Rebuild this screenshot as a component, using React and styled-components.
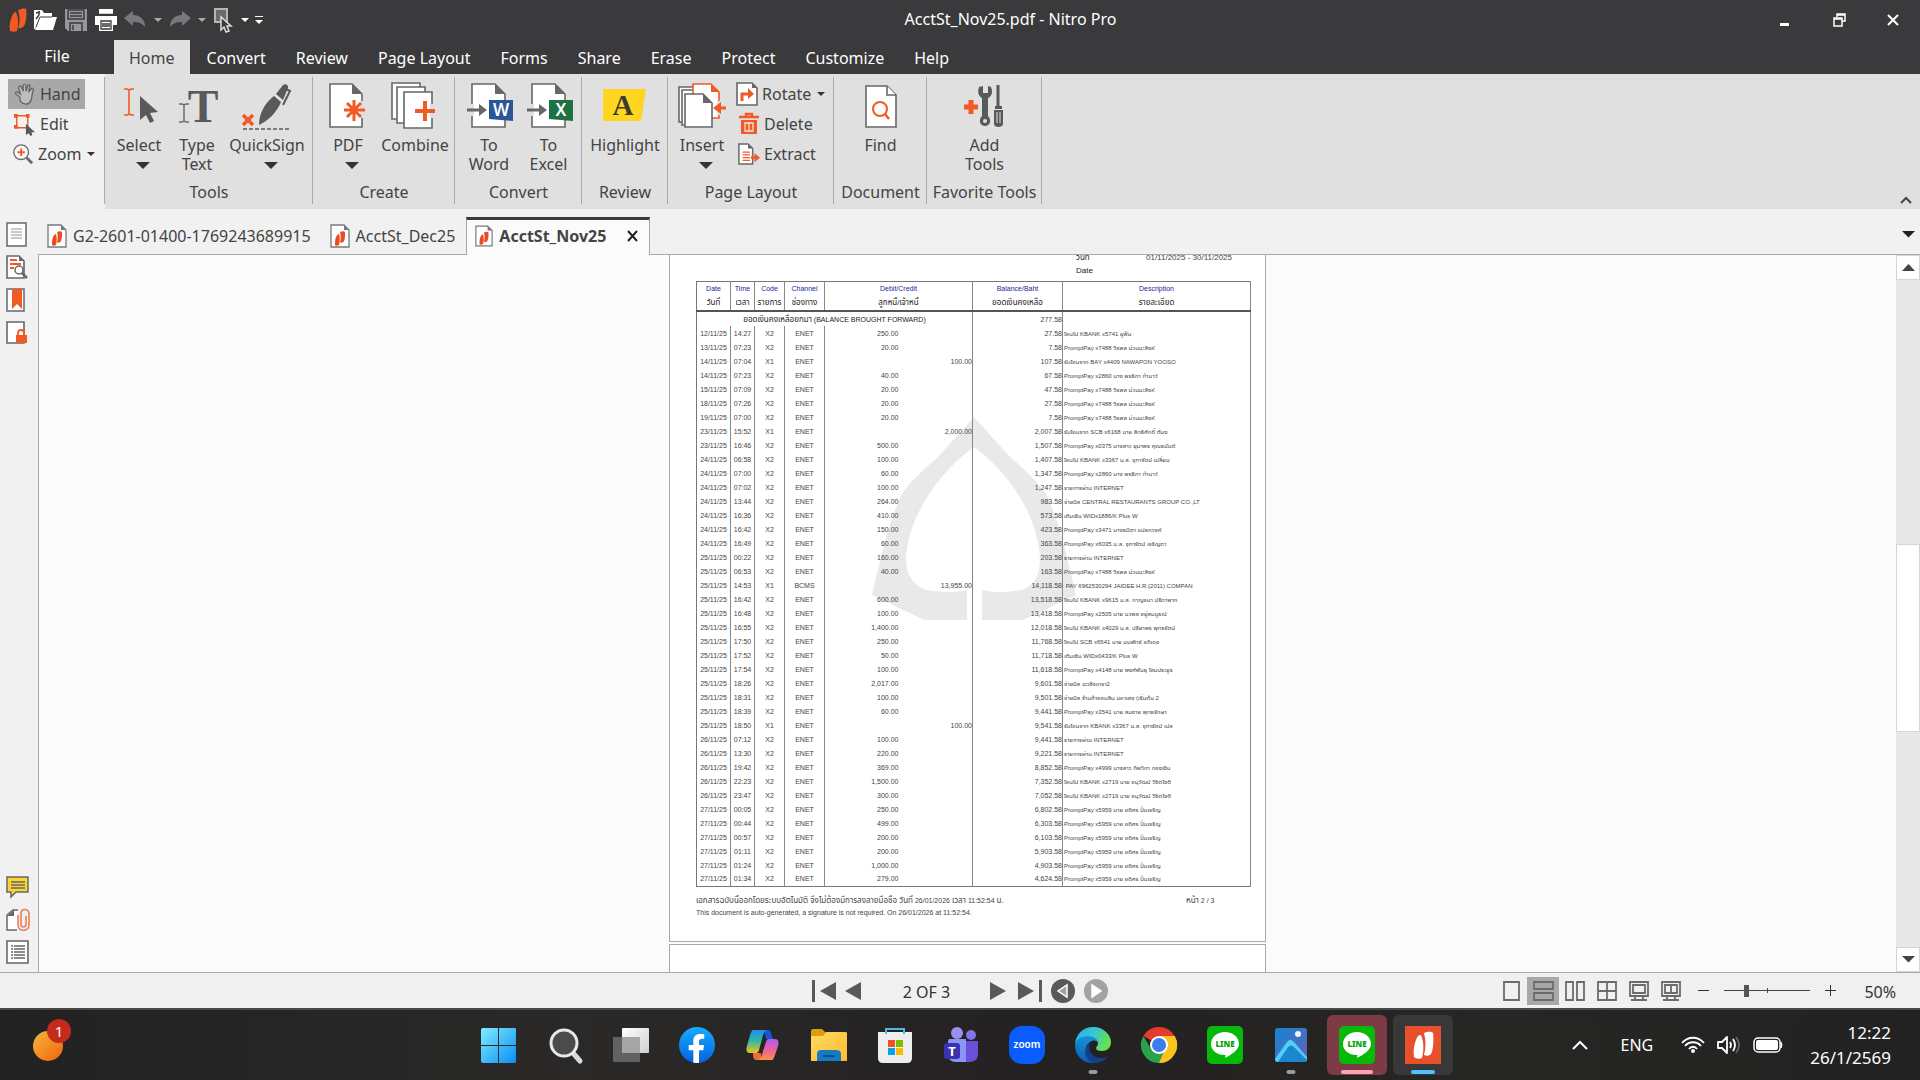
import styled, { createGlobalStyle, css } from "styled-components";
import { FaFacebookF } from "react-icons/fa";

const transactions = [
    ["12/11/25", "14:27", "X2", "ENET", "250.00", "", "27.58", "โอนไป KBANK x5741 ยูฟีน"],
    ["13/11/25", "07:23", "X2", "ENET", "20.00", "", "7.58", "PromptPay x7488 วีรพล น่วมมะสิงห์"],
    ["14/11/25", "07:04", "X1", "ENET", "", "100.00", "107.58", "รับโอนจาก BAY x4409 NAWAPON YOOSO"],
    ["14/11/25", "07:23", "X2", "ENET", "40.00", "", "67.58", "PromptPay x2860 นาง พรธิภา ทำนาว์"],
    ["15/11/25", "07:09", "X2", "ENET", "20.00", "", "47.58", "PromptPay x7488 วีรพล น่วมมะสิงห์"],
    ["18/11/25", "07:26", "X2", "ENET", "20.00", "", "27.58", "PromptPay x7488 วีรพล น่วมมะสิงห์"],
    ["19/11/25", "07:00", "X2", "ENET", "20.00", "", "7.58", "PromptPay x7488 วีรพล น่วมมะสิงห์"],
    ["23/11/25", "15:52", "X1", "ENET", "", "2,000.00", "2,007.58", "รับโอนจาก SCB x6168 นาย สิทธิศักดิ์ ตันง"],
    ["23/11/25", "16:46", "X2", "ENET", "500.00", "", "1,507.58", "PromptPay x0375 นางสาว ยุมาพร คุณธนันต์"],
    ["24/11/25", "06:58", "X2", "ENET", "100.00", "", "1,407.58", "โอนไป KBANK x3367 น.ส. จุฑารัตน์ เปลี่ยน"],
    ["24/11/25", "07:00", "X2", "ENET", "60.00", "", "1,347.58", "PromptPay x2860 นาง พรธิภา ทำนาว์"],
    ["24/11/25", "07:02", "X2", "ENET", "100.00", "", "1,247.58", "รายการผ่าน INTERNET"],
    ["24/11/25", "13:44", "X2", "ENET", "264.00", "", "983.58", "จ่ายบิล CENTRAL RESTAURANTS GROUP CO.,LT"],
    ["24/11/25", "16:36", "X2", "ENET", "410.00", "", "573.58", "เติมเงิน WIDx1886/K Plus W"],
    ["24/11/25", "16:42", "X2", "ENET", "150.00", "", "423.58", "PromptPay x3471 นางธนิตา แปลกวงค์"],
    ["24/11/25", "16:49", "X2", "ENET", "60.00", "", "363.58", "PromptPay x6035 น.ส. จุฑารัตน์ เจริญตา"],
    ["25/11/25", "00:22", "X2", "ENET", "160.00", "", "203.58", "รายการผ่าน INTERNET"],
    ["25/11/25", "06:53", "X2", "ENET", "40.00", "", "163.58", "PromptPay x7488 วีรพล น่วมมะสิงห์"],
    ["25/11/25", "14:53", "X1", "BCMS", "", "13,955.00", "14,118.58", "\u00a0PAY 6962530294 JAIDEE H.R.(2011) COMPAN"],
    ["25/11/25", "16:42", "X2", "ENET", "600.00", "", "13,518.58", "โอนไป KBANK x9615 น.ส. กาญจนา ปรีดาพาก"],
    ["25/11/25", "16:48", "X2", "ENET", "100.00", "", "13,418.58", "PromptPay x2505 นาย นวพล อยู่สมบูรณ์"],
    ["25/11/25", "16:55", "X2", "ENET", "1,400.00", "", "12,018.58", "โอนไป KBANK x4029 น.ส. ปรียาพร พุทธรัตน์"],
    ["25/11/25", "17:50", "X2", "ENET", "250.00", "", "11,768.58", "โอนไป SCB x6541 นาย มนพัทธ์ อภิเดช"],
    ["25/11/25", "17:52", "X2", "ENET", "50.00", "", "11,718.58", "เติมเงิน WIDx0433/K Plus W"],
    ["25/11/25", "17:54", "X2", "ENET", "100.00", "", "11,618.58", "PromptPay x4148 นาย พงศ์พันธุ โฮมประยูร"],
    ["25/11/25", "18:26", "X2", "ENET", "2,017.00", "", "9,601.58", "จ่ายบิล ฉะเชิงเทรา2"],
    ["25/11/25", "18:31", "X2", "ENET", "100.00", "", "9,501.58", "จ่ายบิล ร้านค้าออมสิน มหาเฮง (เริ่มต้น 2"],
    ["25/11/25", "18:39", "X2", "ENET", "60.00", "", "9,441.58", "PromptPay x3541 นาย สมชาย พุทธรักษา"],
    ["25/11/25", "18:50", "X1", "ENET", "", "100.00", "9,541.58", "รับโอนจาก KBANK x3367 น.ส. จุฑารัตน์ เปล"],
    ["26/11/25", "07:12", "X2", "ENET", "100.00", "", "9,441.58", "รายการผ่าน INTERNET"],
    ["26/11/25", "13:30", "X2", "ENET", "220.00", "", "9,221.58", "รายการผ่าน INTERNET"],
    ["26/11/25", "19:42", "X2", "ENET", "369.00", "", "8,852.58", "PromptPay x4999 นางสาว ทิพวิภา กองเงิน"],
    ["26/11/25", "22:23", "X2", "ENET", "1,500.00", "", "7,352.58", "โอนไป KBANK x2719 นาย อนุวัฒน์ วิจิตโชติ"],
    ["26/11/25", "23:47", "X2", "ENET", "300.00", "", "7,052.58", "โอนไป KBANK x2719 นาย อนุวัฒน์ วิจิตโชติ"],
    ["27/11/25", "00:05", "X2", "ENET", "250.00", "", "6,802.58", "PromptPay x5959 นาย อดิศร ปิ่นเจริญ"],
    ["27/11/25", "00:44", "X2", "ENET", "499.00", "", "6,303.58", "PromptPay x5959 นาย อดิศร ปิ่นเจริญ"],
    ["27/11/25", "00:57", "X2", "ENET", "200.00", "", "6,103.58", "PromptPay x5959 นาย อดิศร ปิ่นเจริญ"],
    ["27/11/25", "01:11", "X2", "ENET", "200.00", "", "5,903.58", "PromptPay x5959 นาย อดิศร ปิ่นเจริญ"],
    ["27/11/25", "01:24", "X2", "ENET", "1,000.00", "", "4,903.58", "PromptPay x5959 นาย อดิศร ปิ่นเจริญ"],
    ["27/11/25", "01:34", "X2", "ENET", "279.00", "", "4,624.58", "PromptPay x5959 นาย อดิศร ปิ่นเจริญ"],
];

const menu = ["Home", "Convert", "Review", "Page Layout", "Forms", "Share", "Erase", "Protect", "Customize", "Help"];

const GREY = "#58595b";
const ORANGE = "#f15a24";

/* ---------- icons ---------- */

const Caret = ({ size = 8, color = "#333" }) => (
    <svg width={size} height={size / 2} viewBox="0 0 8 4"><path d="M0 0h8L4 4z" fill={color} /></svg>
);

const NitroMark = ({ width = 18, height = 24, color = "#f15a24" }) => (
    <svg width={width} height={height} viewBox="0 0 18 24">
        <path d="M9 2c3-1 6-2 8-1 1 6 0 12-1 15-1 3-4 5-7 4 2-5 2-12 0-18z" fill={color} />
        <path d="M7 4c2 5 3 11 1 19-2 1-5 1-7 0-1-5 0-10 2-15 1-2 2-4 4-4z" fill={color} />
    </svg>
);

const PdfIcon = ({ active }) => (
    <svg width={active ? 18 : 20} height="24" viewBox="0 0 20 24">
        <path d="M1 1h13l5 5v17H1z" fill="#fff" stroke="#77787a" strokeWidth="1.3" />
        <path d="M14 1l5 5h-5z" fill="#77787a" />
        <path d="M10 8c2-1 4-1 5 0 0 4 0 7-1 9-1 2-3 2-4 1 1-3 1-6 0-10z" fill="#ee4a1f" />
        <path d="M9 10c1 3 1 7 0 11-2 1-3 1-4 0 0-3 0-6 1-8 1-2 2-3 3-3z" fill="#ee4a1f" />
    </svg>
);

const OpenIcon = () => (
    <svg width="25" height="24" viewBox="0 0 25 24">
        <path d="M1 2h8l2 3h8v4H8L2 21H1z" fill="#fff" />
        <path d="M7 9h17l-4 13H2z" fill="#fff" />
        <path d="M3 11l3-4M3 5l4-1M6 3v4" stroke="#3a3a3c" strokeWidth="1.5" fill="none" />
        <path d="M7 9h12M7 9L3 19" stroke="#3a3a3c" strokeWidth="1" fill="none" />
    </svg>
);

const SaveIcon = () => (
    <svg width="24" height="24" viewBox="0 0 24 24">
        <path d="M1 1h22v22H4l-3-3z" fill="#97989a" />
        <path d="M4 2h16v9H4zM6 5h12M6 8h12M6 23v-8h12v8M9 17v5" fill="none" stroke="#3a3a3c" strokeWidth="1.5" />
    </svg>
);

const PrintIcon = () => (
    <svg width="24" height="24" viewBox="0 0 24 24">
        <path d="M5 1h14v5H5zM1 8h22v9h-4v6H5v-6H1z" fill="#fff" />
        <path d="M7 13h10v8H7zM8 16h8M8 18h8M5 6.500h14" fill="none" stroke="#3a3a3c" strokeWidth="1.300" />
    </svg>
);

const UndoIcon = ({ flip }) => (
    <svg width="23" height="20" viewBox="0 0 23 20">
        <path transform={flip ? "translate(23 0) scale(-1 1)" : undefined} d="M0 8L9 1v4c8 0 12 5 12 12-3-4-7-5-12-5v4z" fill="#77787a" />
    </svg>
);

const PointerBoxIcon = () => (
    <svg width="22" height="25" viewBox="0 0 20 25">
        <path d="M2 1h12v13H2z" fill="#6b6c6e" stroke="#b5b5b5" strokeWidth="2" />
        <path d="M8 9v13l3-3 2 5 3-1-2-5h4z" fill="#3a3a3c" stroke="#ddd" strokeWidth="1.500" />
    </svg>
);

const HandIcon = () => (
    <svg width="22" height="25" viewBox="0 0 24 25">
        <path d="M6 15L2 12c-1-1 0-3 2-2l3 2L5 5c0-2 2-2 3-1l2 5V3c0-2 2-2 3 0v6l2-6c1-2 3-1 2 1l-1 6 3-4c1-1 3 0 2 2-2 4-1 9-3 12-2 4-8 4-11 0z" fill="#bdbdbd" stroke="#66676a" strokeWidth="1.500" />
    </svg>
);

const EditIcon = () => (
    <svg width="22" height="25" viewBox="0 0 24 25">
        <path d="M3 3h12v13H3z" fill="none" stroke={ORANGE} strokeWidth="1.500" />
        <path d="M0 1h4v4H0zM13 1h4v4h-4zM0 13h4v4H0z" fill={ORANGE} />
        <path d="M13 12v12l3-2 2 3 2-1-1-3h4z" fill={GREY} />
    </svg>
);

const ZoomIcon = () => (
    <svg width="22" height="25" viewBox="0 0 24 25">
        <circle cx="10" cy="10" r="8" fill="#f7f7f7" stroke="#6b6c6e" strokeWidth="1.500" />
        <path d="M16 16l6 6" stroke="#6b6c6e" strokeWidth="3" />
        <path d="M10 6v8M6 10h8" stroke={ORANGE} strokeWidth="2" />
    </svg>
);

const SelectIcon = () => (
    <svg width="48" height="48" viewBox="0 0 48 48">
        <path d="M9 7h3l2 1 2-1h3M14 8v25M9 33h3l2-1 2 1h3" fill="none" stroke={ORANGE} strokeWidth="1.600" />
        <path d="M25 14v24l6-5 4 8 4-2-4-8 8-1z" fill={GREY} />
    </svg>
);

const TypeTextIcon = () => (
    <svg width="48" height="48" viewBox="0 0 48 48">
        <path d="M6 22h3l2 1 2-1h3M11 22v18M6 40h3l2-1 2 1h3" fill="none" stroke="#6b6c6e" strokeWidth="1.500" />
        <text x="30" y="40" textAnchor="middle" fontFamily="Liberation Serif, serif" fontWeight="bold" fontSize="46" fill={GREY}>T</text>
    </svg>
);

const QuickSignIcon = () => (
    <svg width="50" height="48" viewBox="0 0 50 48">
        <path d="M1 33l10 10M11 33L1 43" stroke={ORANGE} strokeWidth="3.500" />
        <path d="M17 43c0-12 6-22 15-29l7 6c-4 10-12 18-22 23z" fill={GREY} />
        <path d="M34 12l7-9c2-2 6 0 5 3l-5 12z" fill={GREY} />
        <path d="M42 6l6 3-7 14" fill="none" stroke={GREY} strokeWidth="2" />
        <path d="M1 47h48" stroke={GREY} strokeWidth="1.500" strokeDasharray="4 2" />
    </svg>
);

const Sheet = ({ x, y, w = 33, h = 44, fold = 10, stroke = "#66676a" }) => (
    <g>
        <path d={`M${x} ${y}h${w - fold}l${fold} ${fold}v${h - fold}h${-w}z`} fill="#fff" stroke={stroke} strokeWidth="1.600" />
        {fold > 0 && <path d={`M${x + w - fold} ${y}l${fold} ${fold}h${-fold}z`} fill={stroke} />}
    </g>
);

const CreatePdfIcon = () => (
    <svg width="48" height="48" viewBox="0 0 48 48">
        <Sheet x={6} y={2} w={32} h={43} />
        <path d="M38 19v17" stroke="#e0e0e0" strokeWidth="4" />
        <path d="M30 18v21M20 28h21M23 21l14 14M37 21L23 35" stroke={ORANGE} strokeWidth="3" />
    </svg>
);

const CombineIcon = () => (
    <svg width="48" height="48" viewBox="0 0 48 48">
        <Sheet x={1} y={1} w={28} h={36} fold={0} />
        <Sheet x={6} y={5} w={28} h={36} fold={0} />
        <Sheet x={13} y={10} w={28} h={36} fold={0} />
        <path d="M41 22v14" stroke="#e0e0e0" strokeWidth="4" />
        <path d="M34 19v20M24 29h20" stroke={ORANGE} strokeWidth="4" />
    </svg>
);

const OfficeIcon = ({ letter, color }) => (
    <svg width="48" height="48" viewBox="0 0 48 48">
        <Sheet x={7} y={2} w={33} h={43} />
        <path d="M7 22v12" stroke="#e0e0e0" strokeWidth="4" />
        <path d="M2 28h14" stroke="#66676a" strokeWidth="3" />
        <path d="M14 22l8 6-8 6z" fill="#66676a" />
        <path d="M24 18h24v21l-24-2z" fill={color} />
        <text x="36" y="34" textAnchor="middle" fontFamily="Noto Sans, sans-serif" fontWeight="600" fontSize="17" fill="#fff">{letter}</text>
    </svg>
);

const HighlightIcon = () => (
    <svg width="48" height="48" viewBox="0 0 48 48">
        <path d="M2 7h43l-5 32H2z" fill="#ffd51f" />
        <text x="22" y="33" textAnchor="middle" fontFamily="Liberation Serif, serif" fontWeight="bold" fontSize="29" fill="#3c3c32">A</text>
    </svg>
);

const InsertIcon = () => (
    <svg width="50" height="48" viewBox="0 0 50 48">
        <Sheet x={2} y={5} w={27} h={35} fold={0} />
        <Sheet x={5} y={8} w={27} h={35} fold={0} />
        <Sheet x={16} y={2} w={26} h={34} fold={8} stroke={ORANGE} />
        <Sheet x={8} y={12} w={27} h={33} fold={9} />
        <path d="M42 19v14" stroke="#e0e0e0" strokeWidth="4" />
        <path d="M49 26h-8" stroke={ORANGE} strokeWidth="3" />
        <path d="M44 20l-8 6 8 6z" fill={ORANGE} />
    </svg>
);

const RotateIcon = () => (
    <svg width="22" height="24" viewBox="0 0 22 24">
        <Sheet x={1} y={1} w={20} h={22} fold={5} />
        <path d="M6 19v-7h7" fill="none" stroke={ORANGE} strokeWidth="3" />
        <path d="M12 6l6 6-6 5z" fill={ORANGE} />
    </svg>
);

const DeleteIcon = () => (
    <svg width="22" height="24" viewBox="0 0 22 24">
        <path d="M1 5h20M8 4V2h6v2" stroke={ORANGE} strokeWidth="2.500" fill="none" />
        <path d="M3 8h16v14H3z" fill={ORANGE} />
        <path d="M7 11v8h8v-8zM11 11v8" fill="none" stroke="#f4e3dc" strokeWidth="1.300" />
    </svg>
);

const ExtractIcon = () => (
    <svg width="22" height="24" viewBox="0 0 24 24">
        <Sheet x={1} y={1} w={15} h={22} fold={5} />
        <path d="M5 10h8M5 13h8M5 16h8M5 19h8" stroke={ORANGE} strokeWidth="1.500" />
        <path d="M14 16h6" stroke={ORANGE} strokeWidth="3" />
        <path d="M18 11l6 5-6 5z" fill={ORANGE} />
    </svg>
);

const FindIcon = () => (
    <svg width="48" height="48" viewBox="0 0 48 48">
        <path d="M9 4h21l9 9v32H9z" fill="#fff" stroke="#66676a" strokeWidth="1.600" />
        <path d="M30 4v9h9" fill="#fff" stroke="#66676a" strokeWidth="1.600" />
        <circle cx="23" cy="27" r="7" fill="none" stroke={ORANGE} strokeWidth="2" />
        <path d="M28 32l4 5" stroke={ORANGE} strokeWidth="2.500" />
    </svg>
);

const AddToolsIcon = () => (
    <svg width="48" height="48" viewBox="0 0 48 48">
        <path d="M10 18v14M3 25h14" stroke={ORANGE} strokeWidth="5" />
        <path d="M18 5c-2 6 0 9 3 11v18c-4 4-2 10 3 10s7-6 3-10V16c4-2 5-6 3-11l-3-1v7h-5V4z" fill={GREY} />
        <circle cx="24" cy="39" r="2" fill="#e0e0e0" />
        <path d="M37 3v22" stroke={GREY} strokeWidth="3" />
        <path d="M34 24h7v3h-7zM33 28h9v14c0 4-9 4-9 0z" fill={GREY} />
        <path d="M36 30v11M39 30v11" stroke="#e0e0e0" strokeWidth="1" />
    </svg>
);

const PagesIcon = () => (
    <svg width="22" height="25" viewBox="0 0 22 25">
        <path d="M1 1h19v23H1z" fill="#fff" stroke="#66676a" strokeWidth="1.500" />
        <path d="M5 7h11M5 10h11M5 13h11M5 16h11" stroke="#b8b8b8" strokeWidth="1.500" />
    </svg>
);

const SearchPageIcon = () => (
    <svg width="22" height="25" viewBox="0 0 22 25">
        <Sheet x={1} y={1} w={17} h={22} fold={5} />
        <path d="M4 5h7M4 9h11M4 13h4" stroke={ORANGE} strokeWidth="1.800" />
        <circle cx="13" cy="15" r="4" fill="#fff" stroke="#66676a" strokeWidth="1.500" />
        <path d="M16 18l5 5" stroke="#66676a" strokeWidth="2.500" />
    </svg>
);

const BookmarkIcon = () => (
    <svg width="22" height="25" viewBox="0 0 22 25">
        <path d="M1 1h17v22H1z" fill="#fff" stroke="#66676a" strokeWidth="1.500" />
        <path d="M6 1h10v20l-5-5-5 5z" fill={ORANGE} />
    </svg>
);

const SecurityIcon = () => (
    <svg width="22" height="25" viewBox="0 0 22 25">
        <Sheet x={1} y={1} w={17} h={21} fold={0} />
        <path d="M12 14v-2c0-4 6-4 6 0v2" fill="none" stroke={ORANGE} strokeWidth="1.800" />
        <path d="M10 14h11v8H10z" fill={ORANGE} />
    </svg>
);

const CommentIcon = () => (
    <svg width="24" height="24" viewBox="0 0 24 24">
        <path d="M1 2h21v15h-12l-5 5v-5H1z" fill="#fcd535" stroke="#66676a" strokeWidth="1.500" />
        <path d="M5 7h14M5 10h14M5 13h14" stroke="#66676a" strokeWidth="1.500" />
    </svg>
);

const AttachIcon = () => (
    <svg width="24" height="24" viewBox="0 0 24 24">
        <path d="M11 22H1V7l6-5h5v20z" fill="#fff" />
        <path d="M11 22H1V7l6-5h5" fill="none" stroke="#66676a" strokeWidth="1.500" />
        <path d="M1 8l7-6v6z" fill="#66676a" />
        <path d="M12 7v10c0 7 11 7 11 0V6c0-6-8-6-8 0v10c0 4 5 4 5 0V8" fill="none" stroke="#f0795a" strokeWidth="1.600" />
    </svg>
);

const ListIcon = () => (
    <svg width="24" height="25" viewBox="0 0 24 25">
        <path d="M1 1h21v22H1z" fill="#fff" stroke="#66676a" strokeWidth="1.600" />
        <path d="M5 6h2M5 9h2M5 12h2M5 15h2M5 18h2M8 6h11M8 9h11M8 12h11M8 15h11M8 18h11" stroke="#66676a" strokeWidth="1.500" />
    </svg>
);

const NavIcon = ({ kind }) => {
    if (kind === "first" || kind === "last") {
        return (
            <svg width="24" height="22" viewBox="0 0 24 22">
                <g transform={kind === "last" ? "translate(24 0) scale(-1 1)" : undefined} fill={GREY}>
                    <path d="M0 0h3v22H0zM24 2v18L8 11z" />
                </g>
            </svg>
        );
    }
    return (
        <svg width="16" height="22" viewBox="0 0 16 22">
            <path d={kind === "prev" ? "M16 2v18L0 11z" : "M0 2v18l16-9z"} fill={GREY} />
        </svg>
    );
};

const RoundNavIcon = ({ back }) => (
    <svg width="24" height="24" viewBox="0 0 24 24">
        <circle cx="12" cy="12" r="12" fill={back ? GREY : "#a3a3a3"} />
        <path d={back ? "M16 6v12l-9-6z" : "M8 6v12l9-6z"} fill={back ? "#a0a0a0" : "#fff"} stroke="#fff" strokeWidth="1.500" />
    </svg>
);

const viewPaths = {
    single: "M3 1h15v18H3z",
    continuous: "M1 1h19v7H1zM1 12h19v7H1z",
    facing: "M1 1h7v18H1zM12 1h7v18h-7z",
    grid: "M1 1h18v18H1zM10 1v18M1 10h18",
    screen: "M1 1h18v14H1zM4 4h12v8H4zM6 15v3M14 15v3M2 19h16",
    screenFacing: "M1 1h18v14H1zM4 4h12v8H4zM10 4v8M6 15v3M14 15v3M2 19h16",
};

const ViewIcon = ({ kind }) => (
    <svg width="21" height="20" viewBox="0 0 21 20">
        <path d={viewPaths[kind]} fill="none" stroke="#6b6c6e" strokeWidth="1.800" />
    </svg>
);

const WindowsIcon = () => (
    <svg width="36" height="36" viewBox="0 0 36 36">
        <defs><linearGradient id="win" x1="0" y1="0" x2="1" y2="1"><stop offset="0" stopColor="#7eeeff" /><stop offset="1" stopColor="#0a8df5" /></linearGradient></defs>
        <path d="M2 1h15v17H0V3q0-2 2-2zM18 1h16q1 0 1 2v15H18zM0 19h17v17H2q-2 0-2-2zM18 19h17v15q0 2-1 2H18z" fill="url(#win)" />
    </svg>
);

const SearchIcon = () => (
    <svg width="36" height="36" viewBox="0 0 36 36">
        <path d="M26 26l7 8" stroke="#d9dbde" strokeWidth="5" strokeLinecap="round" />
        <circle cx="17" cy="16" r="13" fill="#4a4b4c" stroke="#e9e9ea" strokeWidth="3" />
    </svg>
);

const TaskViewIcon = () => (
    <svg width="36" height="36" viewBox="0 0 36 36">
        <defs><linearGradient id="tv" x1="0" y1="0" x2="1" y2="1"><stop offset="0" stopColor="#fff" /><stop offset="1" stopColor="#cfcfcf" /></linearGradient></defs>
        <rect x="9" y="1" width="27" height="25" rx="1" fill="url(#tv)" />
        <rect x="0" y="10" width="27" height="25" rx="1" fill="#6c6c6c" opacity=".85" />
        <rect x="9" y="10" width="18" height="16" fill="#a5a5a5" />
    </svg>
);

const CopilotIcon = () => (
    <svg width="36" height="36" viewBox="0 0 36 36">
        <defs>
            <linearGradient id="cpA" x1="0" y1="0" x2="0" y2="1"><stop offset="0" stopColor="#1f8ff0" /><stop offset=".45" stopColor="#2bb7a5" /><stop offset="1" stopColor="#ecc61e" /></linearGradient>
            <linearGradient id="cpB" x1="0" y1="0" x2="0" y2="1"><stop offset="0" stopColor="#a95df2" /><stop offset=".5" stopColor="#ec5fa3" /><stop offset="1" stopColor="#f8953d" /></linearGradient>
        </defs>
        <path d="M19 3h4c3 0 3 3 4 6l1 3h-7z" fill="#1754d6" />
        <path d="M8 3h14c-3 1-4 5-5 9l-3 11c-1 3-2 3-4 3H5c-4 0-4-4-3-7L5 8c1-3 2-5 3-5z" fill="url(#cpA)" />
        <path d="M16 33h-5c-3 0-3-4-3-7h8z" fill="#f06a35" />
        <path d="M27 33H13c3-1 4-5 5-9l3-9c1-3 2-3 4-3h5c4 0 4 4 3 7l-3 9c-1 3-2 5-3 5z" fill="url(#cpB)" />
    </svg>
);

const FolderIcon = () => (
    <svg width="36" height="36" viewBox="0 0 36 36">
        <defs><linearGradient id="fd" x1="0" y1="0" x2="1" y2="1"><stop offset="0" stopColor="#ffd968" /><stop offset="1" stopColor="#fcbd2b" /></linearGradient></defs>
        <path d="M0 4q0-2 2-2h9l4 4v8H0z" fill="#dd9d10" />
        <path d="M0 9h12l3-4h19q2 0 2 1v28H0z" fill="url(#fd)" />
        <path d="M6 34V27q0-4 4-4h15q5 0 5 4v7z" fill="#137bc1" />
        <path d="M12 29h12" stroke="#0c4f86" strokeWidth="2" />
    </svg>
);

const StoreIcon = () => (
    <svg width="36" height="36" viewBox="0 0 36 36">
        <path d="M9 8V2h18v6" fill="none" stroke="#4cb8ea" strokeWidth="2" />
        <path d="M1 5h34v26q0 5-5 5H6q-5 0-5-5z" fill="#eeeeee" />
        <path d="M9 7V5M27 7V5" stroke="#4cb8ea" strokeWidth="2" />
        <path d="M11 13h7v7h-7z" fill="#f25022" /><path d="M19 13h7v7h-7z" fill="#7fba00" />
        <path d="M11 21h7v7h-7z" fill="#00a4ef" /><path d="M19 21h7v7h-7z" fill="#ffb900" />
    </svg>
);

const TeamsIcon = () => (
    <svg width="36" height="36" viewBox="0 0 36 36">
        <circle cx="14" cy="6" r="6" fill="#9a8ff0" /><circle cx="28" cy="8" r="5" fill="#8274e6" />
        <path d="M20 14h15v13q0 8-9 8h-6z" fill="#6a50d8" />
        <path d="M6 12h17v23H13q-8 0-8-8V14z" fill="#8a95f8" />
        <rect x="1" y="16" width="16" height="16" rx="3" fill="#3a32b0" />
        <text x="9" y="29" textAnchor="middle" fontFamily="Noto Sans, sans-serif" fontWeight="bold" fontSize="13" fill="#fff">T</text>
    </svg>
);

const ZoomAppIcon = () => (
    <svg width="36" height="36" viewBox="0 0 36 36">
        <rect width="36" height="38" y="-1" rx="13" fill="#0b5cff" />
        <text x="18" y="21" textAnchor="middle" fontFamily="Noto Sans, sans-serif" fontWeight="600" fontSize="10" fill="#fff">zoom</text>
    </svg>
);

const EdgeIcon = () => (
    <svg width="36" height="36" viewBox="0 0 36 36">
        <defs>
            <linearGradient id="edA" x1="0" y1="0" x2="1" y2=".4"><stop offset="0" stopColor="#27a9e8" /><stop offset=".5" stopColor="#35c4dc" /><stop offset="1" stopColor="#63e053" /></linearGradient>
            <linearGradient id="edB" x1="0" y1="0" x2="0" y2="1"><stop offset="0" stopColor="#1694dc" /><stop offset="1" stopColor="#0c5cae" /></linearGradient>
        </defs>
        <path d="M0 17C1 7 8 0 18 0c11 0 18 8 18 15 0 6-4 9-9 9-4 0-6-1-6-3 0-1 2-2 2-5 0-3-4-6-8-6C8 10 2 13 0 17z" fill="url(#edA)" />
        <path d="M0 18c1-6 7-9 13-9 5 0 9 3 10 6-2-1-4-2-6-1-9 3-8 16 3 22C8 37 0 29 0 18z" fill="url(#edB)" />
        <path d="M15 16c-3 8 3 15 11 15 3 0 5-1 7-2-3 5-8 7-14 7C8 33 8 20 15 16z" fill="#123f86" />
    </svg>
);

const ChromeIcon = () => (
    <svg width="36" height="36" viewBox="0 0 36 36">
        <path d="M18 18L2.400 9A18 18 0 0 1 33.600 9z" fill="#e33b2e" />
        <path d="M18 18L33.600 9A18 18 0 0 1 18 36z" fill="#fcc31e" />
        <path d="M18 36A18 18 0 0 1 2.400 9L10 22l8 2 6-2z" fill="#2ba24c" />
        <path d="M18 9h15.600A18 18 0 0 1 18 36l8-13z" fill="#fcc31e" />
        <circle cx="18" cy="18" r="9" fill="#fff" /><circle cx="18" cy="18" r="7" fill="#3b7ded" />
    </svg>
);

const LineIcon = () => (
    <svg width="36" height="36" viewBox="0 0 36 36">
        <rect width="36" height="38" y="-1" rx="5" fill="#06b908" />
        <path d="M18 5c8 0 14 5 14 12 0 6-8 11-14 14 0-1 1-3 0-3C9 28 4 23 4 17 4 10 10 5 18 5z" fill="#fff" />
        <text x="18" y="20" textAnchor="middle" fontFamily="Noto Sans, sans-serif" fontWeight="900" fontSize="8" fill="#06a508">LINE</text>
    </svg>
);

const PhotosIcon = () => (
    <svg width="36" height="36" viewBox="0 0 36 36">
        <defs><linearGradient id="ph" x1="0" y1="0" x2="1" y2="1"><stop offset="0" stopColor="#1684d3" /><stop offset="1" stopColor="#6461b7" /></linearGradient></defs>
        <rect x="2" y="1" width="32" height="34" rx="3" fill="url(#ph)" />
        <path d="M3 34l12-14q3-3 6 0l13 13q0 2-3 2H5z" fill="#1889d0" />
        <path d="M2 32l12-17q3-4 7 0l13 15v3L21 20q-3-3-6 0L5 35q-3 0-3-3z" fill="#4fd0f5" />
        <circle cx="25" cy="7" r="3" fill="#e8f4ff" />
    </svg>
);

const NitroAppIcon = () => (
    <svg width="36" height="36" viewBox="0 0 36 36">
        <rect width="36" height="38" y="-1" fill="#e8502c" />
        <path d="M19 6c3-1 7-2 9 0 1 8 0 15-1 19-1 3-4 5-8 3 2-7 2-15 0-22z" fill="#fff" />
        <path d="M16 8c3 7 3 15 1 23-3 1-6 1-8-1-1-6 0-12 2-17 1-3 2-5 5-5z" fill="#fff" />
    </svg>
);

const taskbarApps = [
    { name: "Start", icon: <WindowsIcon /> },
    { name: "Search", icon: <SearchIcon /> },
    { name: "Task view", icon: <TaskViewIcon /> },
    { name: "Facebook", icon: null },
    { name: "Copilot", icon: <CopilotIcon /> },
    { name: "File Explorer", icon: <FolderIcon /> },
    { name: "Store", icon: <StoreIcon /> },
    { name: "Teams", icon: <TeamsIcon /> },
    { name: "Zoom", icon: <ZoomAppIcon /> },
    { name: "Edge", icon: <EdgeIcon />, state: "running" },
    { name: "Chrome", icon: <ChromeIcon /> },
    { name: "LINE", icon: <LineIcon /> },
    { name: "Photos", icon: <PhotosIcon />, state: "running" },
    { name: "LINE chat", icon: <LineIcon />, state: "alert" },
    { name: "Nitro Pro", icon: <NitroAppIcon />, state: "active" },
];

/* ---------- parts ---------- */

function Tool({ icon, label, width, caret }) {
    return (
        <ToolButton $width={width}>
            {icon}
            <span>{label}</span>
            {caret && <Caret size={14} />}
        </ToolButton>
    );
}

function Group({ title, children }) {
    return (
        <RibbonGroup>
            <GroupTools>{children}</GroupTools>
            <GroupTitle>{title}</GroupTitle>
        </RibbonGroup>
    );
}

function Statement() {
    return (
        <Page>
            <Watermark viewBox="0 0 204 203" aria-hidden="true">
                <path
                    fillRule="evenodd"
                    d="M102 0L138 40Q164 62 174 77C188 106 196 144 204 178L151 203H110V173C128 177 140 174 150 173C164 168 168 156 168 141C166 100 138 56 102 30C66 56 36 100 34 141C34 156 40 168 54 173C64 174 76 177 95 173V203H52L0 178C8 144 16 106 30 77Q40 62 66 40z"
                    fill="#e9e9e9"
                />
            </Watermark>
            <Period>
                <b>วันที่</b>
                <span>01/11/2025 - 30/11/2025</span>
                <b>Date</b>
            </Period>
            <StatementTable>
                <colgroup>
                    <col width="34" /><col width="24" /><col width="30" /><col width="40" />
                    <col width="74" /><col width="74" /><col width="90" /><col width="188" />
                </colgroup>
                <thead>
                    <tr>
                        <th>Date<i>วันที่</i></th>
                        <th>Time<i>เวลา</i></th>
                        <th>Code<i>รายการ</i></th>
                        <th>Channel<i>ช่องทาง</i></th>
                        <th colSpan="2">Debit/Credit<i>ลูกหนี้/เจ้าหนี้</i></th>
                        <th>Balance/Baht<i>ยอดเงินคงเหลือ</i></th>
                        <th>Description<i>รายละเอียด</i></th>
                    </tr>
                </thead>
                <tbody>
                    <tr>
                        <ForwardCell colSpan="6"><Thai>ยอดเงินคงเหลือยกมา</Thai> (BALANCE BROUGHT FORWARD)</ForwardCell>
                        <Cell $align="right">277.58</Cell>
                        <Cell />
                    </tr>
                    {transactions.map(([date, time, code, channel, debit, credit, balance, text], i) => (
                        <tr key={i}>
                            <Cell>{date}</Cell>
                            <Cell>{time}</Cell>
                            <Cell>{code}</Cell>
                            <Cell>{channel}</Cell>
                            <Cell $align="right" $open>{debit}</Cell>
                            <Cell $align="right">{credit}</Cell>
                            <Cell $align="right">{balance}</Cell>
                            <DescriptionCell>{text}</DescriptionCell>
                        </tr>
                    ))}
                </tbody>
            </StatementTable>
            <PageFooter>
                <span>
                    <Thai>เอกสารฉบับนี้ออกโดยระบบอัตโนมัติ จึงไม่ต้องมีการลงลายมือชื่อ วันที่</Thai> 26/01/2026 <Thai>เวลา</Thai> 11:52:54 <Thai>น.</Thai>
                </span>
                <span><Thai>หน้า</Thai> 2 / 3</span>
                <span>This document is auto-generated, a signature is not required. On 26/01/2026 at 11:52:54.</span>
            </PageFooter>
        </Page>
    );
}

export default function App() {
    return (
        <Window>
            <GlobalStyle />
            <TitleBar>
                <QuickAccess>
                    <IconButton aria-label="Nitro"><NitroMark /></IconButton>
                    <IconButton aria-label="Open"><OpenIcon /></IconButton>
                    <IconButton aria-label="Save"><SaveIcon /></IconButton>
                    <IconButton aria-label="Print"><PrintIcon /></IconButton>
                    <IconButton aria-label="Undo"><UndoIcon /><Caret color="#aaa" /></IconButton>
                    <IconButton aria-label="Redo"><UndoIcon flip /><Caret color="#aaa" /></IconButton>
                    <IconButton aria-label="Pointer"><PointerBoxIcon /><Caret color="#fff" /></IconButton>
                    <IconButton aria-label="More">
                        <svg width="8" height="8" viewBox="0 0 8 8"><path d="M0 0h8v1H0zM0 4h8L4 8z" fill="#fff" /></svg>
                    </IconButton>
                </QuickAccess>
                <Title>AcctSt_Nov25.pdf - Nitro Pro</Title>
                <WindowControls>
                    <button aria-label="Minimize"><svg width="12" height="14"><path d="M1 10h9v3H1z" fill="#fff" /></svg></button>
                    <button aria-label="Restore">
                        <svg width="13" height="14" viewBox="0 0 13 14"><path d="M4 4V1h8v7H9M4 2h8M1 5h8v8H1zM1 6h8" fill="none" stroke="#fff" strokeWidth="1.500" /></svg>
                    </button>
                    <button aria-label="Close"><svg width="12" height="12"><path d="M1 1l10 10M11 1L1 11" stroke="#fff" strokeWidth="2" /></svg></button>
                </WindowControls>
            </TitleBar>

            <MenuBar>
                <FileButton>File</FileButton>
                {menu.map((item) => <MenuTab key={item} $active={item === "Home"}>{item}</MenuTab>)}
            </MenuBar>

            <Ribbon>
                <ModePanel>
                    <ModeButton $active><HandIcon />Hand</ModeButton>
                    <ModeButton><EditIcon />Edit</ModeButton>
                    <ModeButton><ZoomIcon />Zoom<Caret /></ModeButton>
                </ModePanel>
                <Group title="Tools">
                    <Tool icon={<SelectIcon />} label="Select" width={60} caret />
                    <Tool icon={<TypeTextIcon />} label="Type Text" width={56} />
                    <Tool icon={<QuickSignIcon />} label="QuickSign" width={84} caret />
                </Group>
                <Group title="Create">
                    <Tool icon={<CreatePdfIcon />} label="PDF" width={62} caret />
                    <Tool icon={<CombineIcon />} label="Combine" width={72} />
                </Group>
                <Group title="Convert">
                    <Tool icon={<OfficeIcon letter="W" color="#2a5699" />} label="To Word" width={60} />
                    <Tool icon={<OfficeIcon letter="X" color="#1e7145" />} label="To Excel" width={59} />
                </Group>
                <Group title="Review">
                    <Tool icon={<HighlightIcon />} label="Highlight" width={78} />
                </Group>
                <Group title="Page Layout">
                    <Tool icon={<InsertIcon />} label="Insert" width={60} caret />
                    <StackedTools>
                        <ModeButton><RotateIcon />Rotate<Caret /></ModeButton>
                        <ModeButton><DeleteIcon />Delete</ModeButton>
                        <ModeButton><ExtractIcon />Extract</ModeButton>
                    </StackedTools>
                </Group>
                <Group title="Document">
                    <Tool icon={<FindIcon />} label="Find" width={85} />
                </Group>
                <Group title="Favorite Tools">
                    <Tool icon={<AddToolsIcon />} label="Add Tools" width={107} />
                </Group>
                <CollapseButton aria-label="Collapse ribbon">
                    <svg width="12" height="8"><path d="M1 7l5-5 5 5" fill="none" stroke="#444" strokeWidth="2" /></svg>
                </CollapseButton>
            </Ribbon>

            <Workspace>
                <SideBar>
                    <IconButton aria-label="Pages"><PagesIcon /></IconButton>
                    <IconButton aria-label="Search pages"><SearchPageIcon /></IconButton>
                    <IconButton aria-label="Bookmarks"><BookmarkIcon /></IconButton>
                    <IconButton aria-label="Security"><SecurityIcon /></IconButton>
                    <Spacer />
                    <IconButton aria-label="Comments"><CommentIcon /></IconButton>
                    <IconButton aria-label="Attachments"><AttachIcon /></IconButton>
                    <IconButton aria-label="Output"><ListIcon /></IconButton>
                </SideBar>
                <Documents>
                    <DocumentTabs>
                        <DocumentTab><PdfIcon />G2-2601-01400-1769243689915</DocumentTab>
                        <DocumentTab><PdfIcon />AcctSt_Dec25</DocumentTab>
                        <DocumentTab $active>
                            <PdfIcon active />AcctSt_Nov25
                            <svg width="11" height="12"><path d="M1 1l9 10M10 1L1 11" stroke="#222" strokeWidth="2" /></svg>
                        </DocumentTab>
                        <TabList aria-label="All documents"><Caret size={13} color="#222" /></TabList>
                    </DocumentTabs>
                    <Viewer>
                        <Pages>
                            <Statement />
                            <Page $next />
                        </Pages>
                        <ScrollBar>
                            <button aria-label="Scroll up"><svg width="13" height="7"><path d="M0 7h13L6.500 0z" fill="#444" /></svg></button>
                            <ScrollTrack><ScrollThumb /></ScrollTrack>
                            <button aria-label="Scroll down"><Caret size={13} color="#444" /></button>
                        </ScrollBar>
                    </Viewer>
                </Documents>
            </Workspace>

            <StatusBar>
                <Pager>
                    <IconButton aria-label="First page"><NavIcon kind="first" /></IconButton>
                    <IconButton aria-label="Previous page"><NavIcon kind="prev" /></IconButton>
                    <PageNumber>2 OF 3</PageNumber>
                    <IconButton aria-label="Next page"><NavIcon kind="next" /></IconButton>
                    <LastPage aria-label="Last page"><NavIcon kind="last" /></LastPage>
                    <IconButton aria-label="Previous view"><RoundNavIcon back /></IconButton>
                    <IconButton aria-label="Next view"><RoundNavIcon /></IconButton>
                </Pager>
                <ViewControls>
                    {Object.keys(viewPaths).map((kind) => (
                        <ViewButton key={kind} aria-label={kind} $active={kind === "continuous"}><ViewIcon kind={kind} /></ViewButton>
                    ))}
                    <ZoomButton aria-label="Zoom out"><svg width="11" height="11"><path d="M0 5h11v1H0z" fill="#333" /></svg></ZoomButton>
                    <ZoomSlider type="range" aria-label="Zoom level" min="0" max="100" defaultValue="25" />
                    <ZoomButton aria-label="Zoom in"><svg width="11" height="11"><path d="M0 5h11v1H0zM5 0h1v11H5z" fill="#333" /></svg></ZoomButton>
                    <ZoomValue>50%</ZoomValue>
                </ViewControls>
            </StatusBar>

            <Taskbar>
                <Widgets aria-label="Widgets"><Weather /><Badge>1</Badge></Widgets>
                <AppList>
                    {taskbarApps.map(({ name, icon, state }) => (
                        <AppButton key={name} aria-label={name} $state={state}>
                            {icon || <FacebookDisc><FaFacebookF /></FacebookDisc>}
                        </AppButton>
                    ))}
                </AppList>
                <Tray>
                    <svg width="16" height="10"><path d="M1 9l7-7 7 7" fill="none" stroke="#fff" strokeWidth="2" /></svg>
                    <Language>ENG</Language>
                    <svg width="24" height="18" viewBox="0 0 24 18">
                        <path d="M1 7C7 0 17 0 23 7M4 10c4-5 12-5 16 0M8 13c2-3 6-3 8 0" fill="none" stroke="#fff" strokeWidth="1.800" />
                        <circle cx="12" cy="15" r="2" fill="#fff" />
                    </svg>
                    <svg width="24" height="20" viewBox="0 0 24 20">
                        <path d="M1 7h4l5-5v16l-5-5H1z" fill="none" stroke="#fff" strokeWidth="1.800" strokeLinejoin="round" />
                        <path d="M13 7q2 3 0 6M16 4q4 6 0 12" fill="none" stroke="#fff" strokeWidth="1.800" />
                        <path d="M19 2q6 8 0 16" fill="none" stroke="#666" strokeWidth="1.800" />
                    </svg>
                    <svg width="30" height="16" viewBox="0 0 30 16">
                        <rect x="1" y="1" width="26" height="14" rx="4" fill="none" stroke="#fff" strokeWidth="1.500" />
                        <rect x="3" y="3" width="22" height="10" rx="2" fill="#fff" />
                        <path d="M28 5q2 3 0 6z" fill="#fff" stroke="#fff" />
                    </svg>
                    <Clock><span>12:22</span><span>26/1/2569</span></Clock>
                </Tray>
            </Taskbar>
        </Window>
    );
}

/* ---------- styles ---------- */

const GlobalStyle = createGlobalStyle`
    * { box-sizing: border-box; }
    body {
        margin: 0;
        font-family: "Noto Sans", sans-serif;
        font-size: 16px;
        color: #444;
    }
    button {
        padding: 0;
        border: 0;
        background: none;
        color: inherit;
        font: inherit;
        cursor: pointer;
    }
    svg { display: block; flex-shrink: 0; overflow: visible; }
`;

const Window = styled.div`
    display: flex;
    flex-direction: column;
    height: 100vh;
    overflow: hidden;
    background: #f1f1f1;
`;

const TitleBar = styled.header`
    display: flex;
    align-items: center;
    height: 40px;
    background: #3a3a3c;
    color: #fff;
`;

const QuickAccess = styled.div`
    display: flex;
    align-items: center;
    gap: 6px;
    padding-left: 9px;
`;

const IconButton = styled.button`
    display: flex;
    align-items: center;
    justify-content: center;
    gap: 7px;
`;

const Title = styled.div`
    flex: 1;
    padding-bottom: 2px;
    text-align: center;
`;

const WindowControls = styled.div`
    display: flex;

    button {
        display: flex;
        align-items: center;
        justify-content: center;
        width: 54px;
        height: 38px;
    }
`;

const MenuBar = styled.nav`
    display: flex;
    height: 34px;
    background: #3a3a3c;
    color: #fff;
`;

const FileButton = styled.button`
    width: 114px;
    padding-bottom: 2px;
`;

const MenuTab = styled.button`
    padding: 0 15px;
    border: 1px solid transparent;
    border-width: 1px 0 0;

    ${({ $active }) => $active && css`
        margin-right: 2px;
        background: #e0e0e0;
        color: #444;
    `}
`;

const Ribbon = styled.section`
    display: flex;
    height: 135px;
    background: #e0e0e0;
`;

const ModePanel = styled.div`
    width: 105px;
    padding: 5px 0 0 8px;
    background: #f1f1f1;
`;

const ModeButton = styled.button`
    display: flex;
    align-items: center;
    gap: 4px;
    height: 30px;
    padding: 0 4px;
    background: ${({ $active }) => ($active ? "#a8a8a8" : "transparent")};

    svg:last-child {
        margin-left: 2px;
    }
`;

const RibbonGroup = styled.div`
    display: flex;
    flex-direction: column;
    justify-content: space-between;
    margin: 3px 0 5px;
    padding: 2px 3px 0 4px;
    border-right: 1px solid #a9a9a9;

    &:nth-child(2) {
        box-shadow: -1px 0 #a9a9a9;
    }
`;

const GroupTools = styled.div`
    display: flex;
`;

const GroupTitle = styled.div`
    line-height: 24px;
    text-align: center;
    white-space: nowrap;
`;

const ToolButton = styled.button`
    display: flex;
    flex-direction: column;
    align-items: center;
    width: ${({ $width }) => $width}px;
    padding-top: 3px;
    line-height: 19px;

    span {
        max-width: 80px;
        margin-top: 6px;
        width: min-content;
    }

    span + svg {
        margin: 7px 0 0 8px;
    }
`;

const StackedTools = styled.div`
    width: 98px;
`;

const CollapseButton = styled.button`
    align-self: flex-end;
    margin: 0 8px 5px auto;
`;

const Workspace = styled.main`
    display: flex;
    flex: 1;
    min-height: 0;
`;

const SideBar = styled.aside`
    display: flex;
    flex-direction: column;
    align-items: flex-start;
    gap: 8px;
    width: 38px;
    padding: 13px 0 7px 6px;

    button {
        height: 25px;
    }
`;

const Spacer = styled.div`
    flex: 1;
`;

const Documents = styled.div`
    display: flex;
    flex-direction: column;
    flex: 1;
    min-width: 0;
`;

const DocumentTabs = styled.div`
    display: flex;
    align-items: flex-end;
    height: 46px;
    border-bottom: 1px solid #a9a9a9;
`;

const DocumentTab = styled.button`
    display: flex;
    align-items: center;
    gap: 6px;
    height: 37px;
    padding: 0 10px 0 9px;

    ${({ $active }) => $active && css`
        height: 38px;
        margin: 0 0 -1px 1px;
        padding: 0 11px 3px 8px;
        border: 1px solid #a9a9a9;
        border-width: 3px 1px 0;
        border-top-color: #3a3a3c;
        background: #fbfbfb;
        font-weight: 700;

        svg:last-child {
            margin-left: 15px;
        }
    `}
`;

const TabList = styled.button`
    align-self: center;
    margin: 6px 5px 0 auto;
`;

const Viewer = styled.div`
    display: flex;
    flex: 1;
    min-height: 0;
    border-left: 1px solid #a9a9a9;
    background: #fbfbfb;
`;

const Pages = styled.div`
    display: flex;
    flex-direction: column;
    align-items: center;
    gap: 2px;
    flex: 1;
    overflow: hidden;
`;

const Page = styled.article`
    position: relative;
    flex-shrink: 0;
    width: 597px;
    padding: 0 15px 22px 26px;
    border: 1px solid #a9a9a9;
    border-top-width: ${({ $next }) => ($next ? 1 : 0)}px;
    min-height: 120px;
    background: #fff;
    font-family: "Liberation Sans", "Noto Sans Thai", sans-serif;
    font-size: 7px;
    color: #444;
`;

const Watermark = styled.svg`
    position: absolute;
    top: 162px;
    left: 202px;
    width: 204px;
`;

const Thai = styled.span`
    font-size: 8px;
`;

const Period = styled.div`
    display: grid;
    grid-template-columns: 70px 1fr;
    margin: -4px 0 4px 380px;
    font-size: 8px;
    line-height: 13px;

    b {
        font-weight: 400;
        color: #222;
    }
`;

const StatementTable = styled.table`
    position: relative;
    width: 554px;
    table-layout: fixed;
    border-collapse: collapse;
    border: 1px solid #777;

    th {
        height: 29px;
        padding: 0;
        border-right: 1px solid #888;
        border-bottom: 2px solid #555;
        font-weight: 400;
        line-height: 14px;
        white-space: nowrap;
        color: #24249a;
    }

    i {
        display: block;
        font-size: 8px;
        font-style: normal;
        color: #222;
    }
`;

const Cell = styled.td`
    height: 14px;
    padding: 1px 0 0;
    border-right: ${({ $open }) => ($open ? "0" : "1px solid #888")};
    line-height: 12px;
    text-align: ${({ $align }) => $align || "center"};
    white-space: nowrap;
`;

const ForwardCell = styled(Cell)`
    height: 15px;
    color: #222;
`;

const DescriptionCell = styled(Cell)`
    overflow: hidden;
    padding-left: 1px;
    font-size: 6px;
    text-align: left;
`;

const PageFooter = styled.footer`
    display: grid;
    grid-template-columns: 490px 1fr;
    margin-top: 8px;
    line-height: 12px;
`;

const ScrollBar = styled.div`
    display: flex;
    flex-direction: column;
    width: 24px;
    background: #e8e8e8;

    button {
        display: flex;
        align-items: center;
        justify-content: center;
        height: 25px;
        border: 1px solid #d5d5d5;
        background: #fff;
    }
`;

const ScrollTrack = styled.div`
    flex: 1;
    padding-top: 264px;
`;

const ScrollThumb = styled.div`
    height: 188px;
    border: 1px solid #d5d5d5;
    background: #fff;
`;

const StatusBar = styled.footer`
    display: grid;
    grid-template-columns: 1fr auto 1fr;
    align-items: center;
    height: 36px;
    border-top: 1px solid #a9a9a9;
    background: #f0f0f0;
    color: #333;
`;

const Pager = styled.div`
    display: flex;
    grid-column: 2;
    align-items: center;
    gap: 9px;
`;

const PageNumber = styled.span`
    width: 111px;
    padding: 2px 0 0 2px;
    text-align: center;
`;

const LastPage = styled(IconButton)`
    margin-left: 3px;
`;

const ViewControls = styled.div`
    display: flex;
    align-items: center;
    justify-content: flex-end;
    padding-right: 24px;
`;

const ViewButton = styled.button`
    display: flex;
    align-items: center;
    justify-content: center;
    width: 32px;
    height: 28px;
    background: ${({ $active }) => ($active ? "#a8a8a8" : "transparent")};
`;

const ZoomButton = styled.button`
    padding: 0 11px;
`;

const ZoomSlider = styled.input`
    width: 86px;
    height: 12px;
    margin: 0 4px;
    appearance: none;
    background:
        linear-gradient(#444, #444) center / 1px 5px no-repeat,
        linear-gradient(#444, #444) center / 100% 1px no-repeat;

    &::-webkit-slider-thumb {
        appearance: none;
        width: 5px;
        height: 12px;
        background: #555;
    }
`;

const ZoomValue = styled.span`
    width: 49px;
    padding-top: 2px;
    text-align: right;
`;

const Taskbar = styled.footer`
    display: grid;
    grid-template-columns: 1fr auto 1fr;
    align-items: center;
    height: 72px;
    border-top: 2px solid #484a49;
    background: linear-gradient(90deg, #222, #2a2928 30%, #232121 55%, #262624 78%, #222);
    color: #fff;
`;

const Widgets = styled.button`
    position: relative;
    width: 40px;
    height: 44px;
    margin: 0 0 5px 32px;
`;

const Weather = styled.span`
    display: block;
    width: 30px;
    height: 30px;
    margin: 6px 0 0 1px;
    border-radius: 50%;
    background: linear-gradient(135deg, #f4b63c, #f2640c);
`;

const Badge = styled.span`
    position: absolute;
    top: -2px;
    right: 1px;
    width: 24px;
    height: 24px;
    border-radius: 50%;
    background: #c42b1c;
    font-size: 15px;
    line-height: 24px;
`;

const AppList = styled.div`
    display: flex;
    gap: 6px;
    padding-left: 1px;
`;

const barColor = { running: "#9a9a9a", alert: "#f9a3b4", active: "#4cc2ff" };
const tileColor = { alert: "#7d3b45", active: "#383838" };

const AppButton = styled.button`
    position: relative;
    display: flex;
    align-items: center;
    justify-content: center;
    width: 60px;
    height: 60px;
    border-radius: 6px;
    background: ${({ $state }) => tileColor[$state] || "transparent"};

    ${({ $state }) => $state && css`
        &::after {
            content: "";
            position: absolute;
            bottom: 1px;
            left: 50%;
            width: ${{ running: 9, alert: 32, active: 24 }[$state]}px;
            height: 4px;
            border-radius: 2px;
            background: ${barColor[$state]};
            transform: translateX(-50%);
        }
    `}
`;

const FacebookDisc = styled.span`
    display: flex;
    align-items: flex-end;
    justify-content: center;
    width: 36px;
    height: 36px;
    overflow: hidden;
    border-radius: 50%;
    background: linear-gradient(#18acfe, #0163e0);
    font-size: 29px;
`;

const Tray = styled.div`
    display: flex;
    align-items: center;
    justify-content: flex-end;
    gap: 12px;
    padding-right: 29px;
`;

const Language = styled.span`
    padding: 0 16px 0 21px;
`;

const Clock = styled.div`
    display: flex;
    flex-direction: column;
    margin-left: 15px;
    font-size: 17px;
    line-height: 25px;
    text-align: right;
`;
